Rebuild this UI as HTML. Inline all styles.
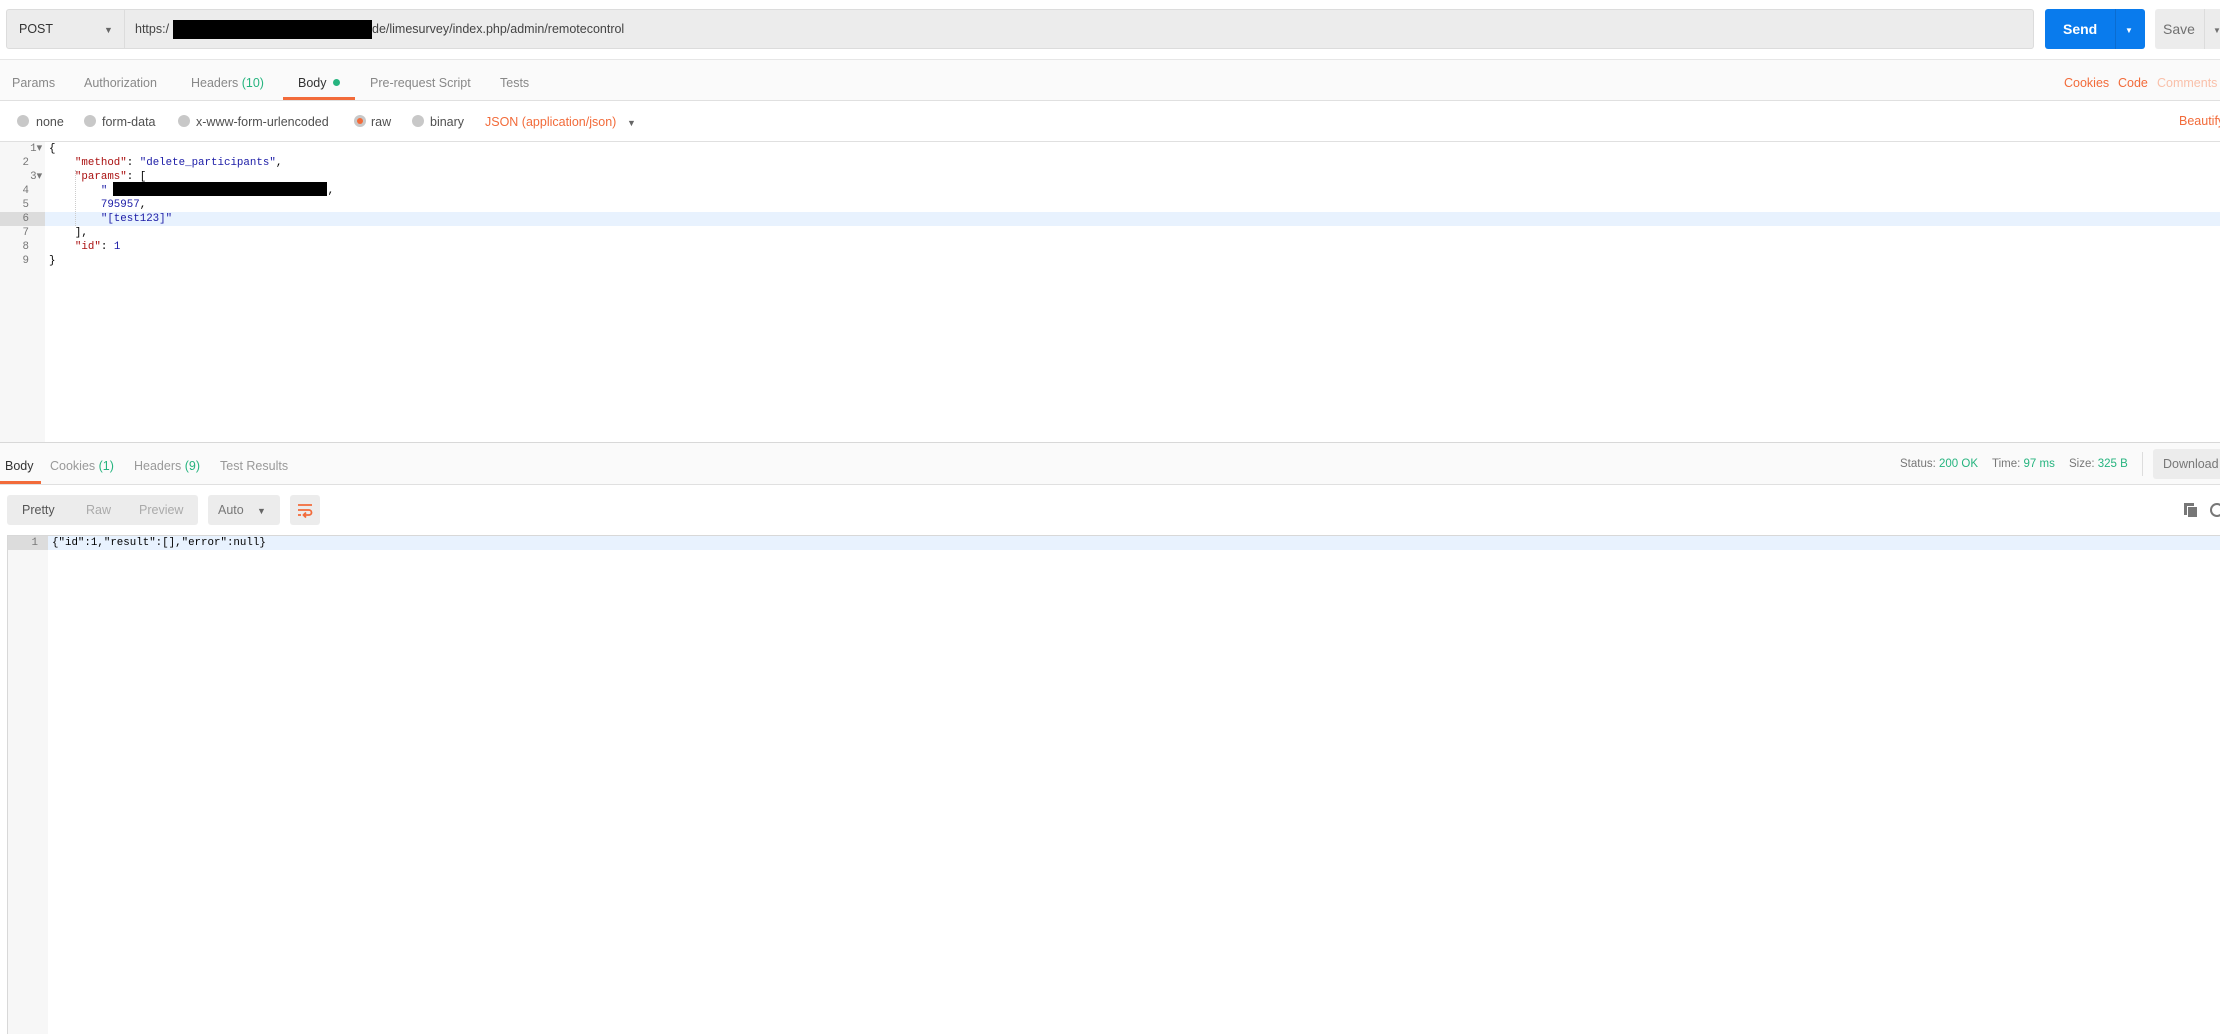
<!DOCTYPE html>
<html><head><meta charset="utf-8"><style>
*{margin:0;padding:0;box-sizing:border-box}
body{width:2220px;height:1034px;background:#fff;font-family:"Liberation Sans",sans-serif;position:relative;overflow:hidden;color:#505050}
.a{position:absolute}
.t{font-size:12.5px;white-space:nowrap;line-height:14px}
.mono{font-family:"Liberation Mono",monospace;font-size:10.8px;white-space:pre;line-height:14px}
.g{color:#26b47f}
.o{color:#f26b3a}
.rad{width:12px;height:12px;border-radius:50%;background:#c8c8c8;top:115px}
</style></head><body>
<!-- URL bar -->
<div class="a" style="left:6px;top:9px;width:2028px;height:40px;background:#ececec;border:1px solid #dcdcdc;border-radius:3px"></div>
<div class="a t" style="left:19px;top:22px;color:#333">POST</div>
<div class="a t" style="left:104px;top:23px;font-size:9px;color:#666">▼</div>
<div class="a" style="left:124px;top:10px;width:1px;height:38px;background:#dcdcdc"></div>
<div class="a t" style="left:135px;top:22px;color:#444">https:/</div>
<div class="a" style="left:173px;top:20px;width:199px;height:19px;background:#000"></div>
<div class="a t" style="left:372px;top:22px;color:#444">de/limesurvey/index.php/admin/remotecontrol</div>
<!-- Send -->
<div class="a" style="left:2045px;top:9px;width:100px;height:40px;background:#097bed;border-radius:3px"></div>
<div class="a" style="left:2115px;top:9px;width:1px;height:40px;background:#0a6cd0"></div>
<div class="a t" style="left:2063px;top:22px;color:#fff;font-weight:bold;font-size:14px">Send</div>
<div class="a t" style="left:2125px;top:24px;color:#fff;font-size:8px">▼</div>
<div class="a" style="left:2155px;top:9px;width:80px;height:40px;background:#ececec;border-radius:3px"></div>
<div class="a" style="left:2204px;top:9px;width:1px;height:40px;background:#dcdcdc"></div>
<div class="a t" style="left:2163px;top:22px;color:#707070;font-size:14px">Save</div>
<div class="a t" style="left:2213px;top:24px;color:#707070;font-size:8px">▼</div>
<!-- tabs row -->
<div class="a" style="left:0;top:59px;width:2220px;height:42px;background:#fafafa;border-top:1px solid #e6e6e6;border-bottom:1px solid #e0e0e0"></div>
<div class="a t" style="left:12px;top:76px;color:#888">Params</div>
<div class="a t" style="left:84px;top:76px;color:#888">Authorization</div>
<div class="a t" style="left:191px;top:76px;color:#888">Headers <span class="g">(10)</span></div>
<div class="a t" style="left:298px;top:76px;color:#333">Body</div>
<div class="a" style="left:333px;top:79px;width:7px;height:7px;border-radius:50%;background:#26b47f"></div>
<div class="a" style="left:283px;top:97px;width:72px;height:3px;background:#f26b3a"></div>
<div class="a t" style="left:370px;top:76px;color:#888">Pre-request Script</div>
<div class="a t" style="left:500px;top:76px;color:#888">Tests</div>
<div class="a t o" style="left:2064px;top:76px">Cookies</div>
<div class="a t o" style="left:2118px;top:76px">Code</div>
<div class="a t" style="left:2157px;top:76px;color:#f9c0aa">Comments</div>
<!-- radio row -->
<div class="a rad" style="left:17px"></div><div class="a t" style="left:36px;top:115px">none</div>
<div class="a rad" style="left:84px"></div><div class="a t" style="left:102px;top:115px">form-data</div>
<div class="a rad" style="left:178px"></div><div class="a t" style="left:196px;top:115px">x-www-form-urlencoded</div>
<div class="a rad" style="left:354px"></div><div class="a" style="left:357px;top:118px;width:6px;height:6px;border-radius:50%;background:#f26b3a"></div><div class="a t" style="left:371px;top:115px">raw</div>
<div class="a rad" style="left:412px"></div><div class="a t" style="left:430px;top:115px">binary</div>
<div class="a t o" style="left:485px;top:115px">JSON (application/json)</div>
<div class="a t" style="left:627px;top:116px;font-size:9px;color:#666">▼</div>
<div class="a t o" style="left:2179px;top:114px">Beautify</div>
<!-- editor -->
<div class="a" style="left:0;top:141px;width:2220px;height:1px;background:#e0e0e0"></div>
<div class="a" style="left:0;top:142px;width:45px;height:300px;background:#f7f7f7"></div>
<div class="a" style="left:45px;top:212px;width:2175px;height:14px;background:#e8f2fe"></div>
<div class="a" style="left:0;top:212px;width:45px;height:14px;background:#dcdcdc"></div>
<div class="a mono" style="left:0;top:142px;width:45px;text-align:right;padding-right:3px;color:#777">1▾
2  
3▾
4  
5  
6  
7  
8  
9  </div>
<div class="a mono" style="left:49px;top:142px;color:#000">{
    <span style="color:#a11">"method"</span>: <span style="color:#1a1aa6">"delete_participants"</span>,
    <span style="color:#a11">"params"</span>: [
        <span style="color:#1a1aa6">"                                 "</span>,
        <span style="color:#1a1aa6">795957</span>,
        <span style="color:#1a1aa6">"[test123]"</span>
    ],
    <span style="color:#a11">"id"</span>: <span style="color:#1a1aa6">1</span>
}</div>
<div class="a" style="left:113px;top:182px;width:214px;height:14px;background:#000"></div>
<div class="a" style="left:75px;top:170px;width:1px;height:56px;border-left:1px dotted #ccc"></div>
<!-- response header -->
<div class="a" style="left:0;top:442px;width:2220px;height:43px;background:#fafafa;border-top:1px solid #d8d8d8;border-bottom:1px solid #e0e0e0"></div>
<div class="a t" style="left:5px;top:459px;color:#333">Body</div>
<div class="a" style="left:0;top:481px;width:41px;height:3px;background:#f26b3a"></div>
<div class="a t" style="left:50px;top:459px;color:#999">Cookies <span class="g">(1)</span></div>
<div class="a t" style="left:134px;top:459px;color:#999">Headers <span class="g">(9)</span></div>
<div class="a t" style="left:220px;top:459px;color:#999">Test Results</div>
<div class="a t" style="left:1900px;top:457px;font-size:11.5px;color:#777">Status: <span class="g">200 OK</span></div>
<div class="a t" style="left:1992px;top:457px;font-size:11.5px;color:#777">Time: <span class="g">97 ms</span></div>
<div class="a t" style="left:2069px;top:457px;font-size:11.5px;color:#777">Size: <span class="g">325 B</span></div>
<div class="a" style="left:2142px;top:452px;width:1px;height:24px;background:#ddd"></div>
<div class="a" style="left:2153px;top:449px;width:80px;height:30px;background:#ececec;border-radius:3px"></div>
<div class="a t" style="left:2163px;top:457px;color:#777">Download</div>
<!-- buttons -->
<div class="a" style="left:7px;top:495px;width:191px;height:30px;background:#ececec;border-radius:3px"></div>
<div class="a t" style="left:22px;top:503px;color:#555">Pretty</div>
<div class="a t" style="left:86px;top:503px;color:#aaa">Raw</div>
<div class="a t" style="left:139px;top:503px;color:#aaa">Preview</div>
<div class="a" style="left:208px;top:495px;width:72px;height:30px;background:#ececec;border-radius:3px"></div>
<div class="a t" style="left:218px;top:503px;color:#777">Auto</div>
<div class="a t" style="left:257px;top:504px;font-size:9px;color:#666">▼</div>
<div class="a" style="left:290px;top:495px;width:30px;height:30px;background:#ececec;border-radius:3px"></div>
<svg class="a" style="left:296px;top:501px" width="18" height="18" viewBox="0 0 18 18"><path d="M2 4H16M2 9H13a2.5 2.5 0 0 1 0 5H8M2 14H5M10 11.5L7.5 14L10 16.5" stroke="#f26b3a" stroke-width="1.8" fill="none"/></svg>
<div class="a" style="left:2184px;top:503px;width:10px;height:12px;background:#777"></div>
<div class="a" style="left:2187px;top:506px;width:11px;height:12px;background:#777;border:1px solid #fff"></div>
<div class="a" style="left:2210px;top:503px;width:14px;height:14px;border:2px solid #777;border-radius:50%"></div>
<!-- response editor -->
<div class="a" style="left:7px;top:535px;width:2213px;height:1px;background:#d8d8d8"></div>
<div class="a" style="left:7px;top:536px;width:1px;height:498px;background:#d8d8d8"></div>
<div class="a" style="left:8px;top:536px;width:40px;height:498px;background:#f7f7f7"></div>
<div class="a" style="left:48px;top:536px;width:2172px;height:14px;background:#e8f2fe"></div>
<div class="a" style="left:8px;top:536px;width:40px;height:14px;background:#dcdcdc"></div>
<div class="a mono" style="left:8px;top:536px;width:30px;text-align:right;color:#777">1</div>
<div class="a mono" style="left:52px;top:536px;color:#000">{"id":1,"result":[],"error":null}</div>
</body></html>
